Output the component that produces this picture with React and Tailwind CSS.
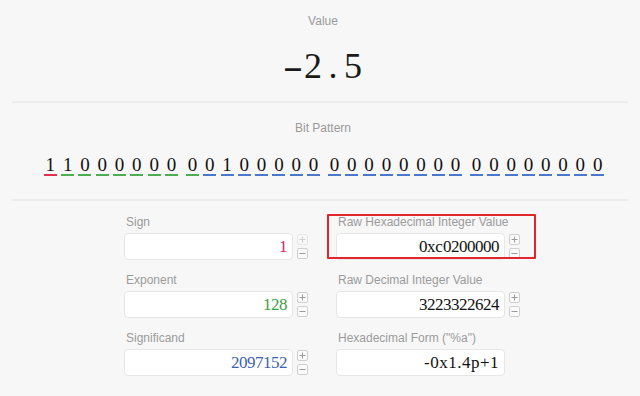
import React from "react";

const bits = "11000000001000000000000000000000".split("");

function Chars({ text, boxClass }) {
  return text.split("").map((c, i) => (
    <span key={i} className={boxClass}>
      {c}
    </span>
  ));
}

function Stepper({ dimPlus }) {
  const box =
    "w-[11px] h-[11px] rounded-[2px] border border-[#cfcfcf] bg-[#fafafa] flex items-center justify-center";
  return (
    <div className="ml-[4px] mt-[1px] flex flex-col gap-[3px]">
      <div className={box + (dimPlus ? " opacity-40" : "")}>
        <svg width="7" height="7" viewBox="0 0 7 7">
          <path d="M0.5 3.5H6.5M3.5 0.5V6.5" stroke="#9a9a9a" strokeWidth="1" />
        </svg>
      </div>
      <div className={box}>
        <svg width="7" height="7" viewBox="0 0 7 7">
          <path d="M0.5 3.5H6.5" stroke="#9a9a9a" strokeWidth="1" />
        </svg>
      </div>
    </div>
  );
}

function Field({ label, value, color, stepper, dimPlus, highlight, plain }) {
  return (
    <div className="relative">
      <div className="pl-[2px] text-[12px] leading-[14px] text-[#9b9b9b]">{label}</div>
      <div className="mt-[4px] flex">
        <div className="w-[169px] h-[27px] rounded-[4px] border border-[#e6e6e6] bg-white flex items-center justify-end pr-[5px]">
          {plain ? (
            <span className={"font-['Liberation_Serif',serif] text-[17px] leading-[20px] tracking-[0.5px] " + color}>
              {value}
            </span>
          ) : (
            <span className={"font-['Liberation_Serif',serif] text-[17px] leading-[20px] flex " + color}>
              <Chars text={value} boxClass="inline-block w-[8px] text-center" />
            </span>
          )}
        </div>
        {stepper && <Stepper dimPlus={dimPlus} />}
      </div>
      {highlight && (
        <div className="absolute left-[-9px] top-[-1px] w-[209px] h-[45px] border-2 border-[#e3262b] rounded-[1px]" />
      )}
    </div>
  );
}

export default function App() {
  const groups = [0, 1, 2, 3].map((g) => bits.slice(g * 8, g * 8 + 8));
  return (
    <div className="w-[640px] min-h-[396px] bg-[#f7f7f7] font-['Liberation_Sans',Arial,sans-serif] overflow-hidden">
      <div className="pl-[6px] pt-[14px] text-center text-[12px] leading-[14px] text-[#9a9a9a]">Value</div>
      <div className="pl-[6px] mt-[18px] flex justify-center font-['Liberation_Serif',serif] text-[36px] leading-[40px] text-[#1a1a1a]">
        <span className="inline-block w-[20px] text-center scale-x-[1.7]">-</span>
        <Chars text="2.5" boxClass="inline-block w-[20px] text-center" />
      </div>
      <div className="mt-[15px] mx-3 h-[2px] bg-[#ececec]" />

      <div className="pl-[6px] mt-[18px] text-center text-[12px] leading-[14px] text-[#9a9a9a]">Bit Pattern</div>
      <div className="pl-[8px] mt-[21px] flex justify-center gap-[8px] font-['Liberation_Serif',serif] text-[19px] leading-[18px] text-[#111]">
        {groups.map((grp, gi) => (
          <div key={gi} className="flex gap-[4.3px]">
            {grp.map((b, i) => {
              const idx = gi * 8 + i;
              const border =
                idx === 0
                  ? "border-[#e0304e]"
                  : idx <= 8
                  ? "border-[#4cae50]"
                  : "border-[#4a78cc]";
              return (
                <span key={i} className={"inline-block w-[13px] text-center border-b-2 " + border}>
                  {b}
                </span>
              );
            })}
          </div>
        ))}
      </div>
      <div className="mt-[23px] mx-3 h-[2px] bg-[#ececec]" />

      <div className="pl-[4px] mt-[14px]">
        <div className="w-[396px] mx-auto grid grid-cols-2 gap-x-[28px] gap-y-[13px]">
          <Field label="Sign" value="1" color="text-[#d42a64]" stepper dimPlus />
          <Field label="Raw Hexadecimal Integer Value" value="0xc0200000" color="text-[#111]" stepper highlight />
          <Field label="Exponent" value="128" color="text-[#3f9e43]" stepper />
          <Field label="Raw Decimal Integer Value" value="3223322624" color="text-[#111]" stepper />
          <Field label="Significand" value="2097152" color="text-[#3d62b3]" stepper />
          <Field label='Hexadecimal Form ("%a")' value="-0x1.4p+1" color="text-[#111]" plain />
        </div>
      </div>
    </div>
  );
}
